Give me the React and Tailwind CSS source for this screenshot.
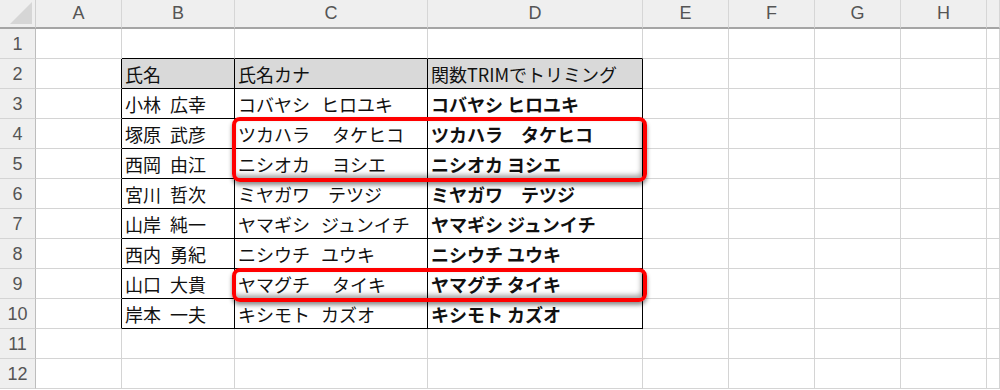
import React from 'react';

const colWidths = '36px 86px 113px 193px 215px 86px 86px 86px 86px 13px';
const letters = ['A', 'B', 'C', 'D', 'E', 'F', 'G', 'H', ''];

// table data, rows 2..10
const rows = [
  ['氏名', '氏名カナ', '関数TRIMでトリミング'],
  ['小林 広幸', 'コバヤシ ヒロユキ', 'コバヤシ ヒロユキ'],
  ['塚原 武彦', 'ツカハラ　 タケヒコ', 'ツカハラ　タケヒコ'],
  ['西岡 由江', 'ニシオカ 　ヨシエ', 'ニシオカ ヨシエ'],
  ['宮川 哲次', 'ミヤガワ　テツジ', 'ミヤガワ　テツジ'],
  ['山岸 純一', 'ヤマギシ ジュンイチ', 'ヤマギシ ジュンイチ'],
  ['西内 勇紀', 'ニシウチ ユウキ', 'ニシウチ ユウキ'],
  ['山口 大貴', 'ヤマグチ　 タイキ', 'ヤマグチ タイキ'],
  ['岸本 一夫', 'キシモト カズオ', 'キシモト カズオ'],
];

const jp = { fontFamily: '"Noto Sans CJK JP", "Noto Sans", sans-serif' };

function Cell({ r, c }) {
  // r: 1..12, c: 1..9 (A..H + overflow)
  const inTable = r >= 2 && r <= 10 && c >= 2 && c <= 4;
  const leftOfTable = r >= 2 && r <= 10 && c === 1;
  const aboveTable = r === 1 && c >= 2 && c <= 4;
  const text = inTable ? rows[r - 2][c - 2] : '';
  let cls = 'border-r border-b flex items-end pb-[3px] pl-[3px] whitespace-pre overflow-hidden text-[18px] leading-[22px] text-[#111] ';
  if (inTable) cls += 'border-black ';
  else if (leftOfTable) cls += 'border-b-[#d4d4d4] border-r-black ';
  else if (aboveTable) cls += 'border-r-[#d4d4d4] border-b-black ';
  else cls += 'border-[#d4d4d4] ';
  if (inTable && r === 2) cls += 'bg-[#d9d9d9] ';
  else cls += 'bg-white ';
  if (inTable && c === 4 && r > 2) cls += 'font-bold ';
  if (inTable && c === 2) cls += '[word-spacing:5px] ';
  // a full-width space already makes the gap wide, only plain spaces get widened
  if (inTable && c === 3 && !text.includes('　')) cls += '[word-spacing:7px] ';
  return (
    <div className={cls} style={jp}>
      {text}
    </div>
  );
}

export default function App() {
  const cells = [];
  for (let r = 1; r <= 12; r++) {
    cells.push(
      <div
        key={`h${r}`}
        className="bg-[#efefef] border-r border-r-[#bdbdbd] border-b border-b-[#d4d4d4] flex items-center justify-center text-[18px] text-[#555] pt-[2px]"
        style={{ fontFamily: '"Liberation Sans", Arial, sans-serif' }}
      >
        {r}
      </div>
    );
    for (let c = 1; c <= 9; c++) cells.push(<Cell key={`${r}-${c}`} r={r} c={c} />);
  }

  return (
    <div className="relative w-[1000px] h-[390px] overflow-hidden bg-white">
      <div className="grid" style={{ gridTemplateColumns: colWidths, gridTemplateRows: '29px repeat(12, 30px)' }}>
        <div className="bg-[#efefef] border-r border-r-[#d0d0d0] border-b-2 border-b-[#a5a5a5] relative">
          <svg className="absolute right-[3px] bottom-[3px]" width="22" height="22" viewBox="0 0 22 22">
            <polygon points="22,0 22,22 0,22" fill="#d6d6d6" />
          </svg>
        </div>
        {letters.map((l, i) => (
          <div
            key={l + i}
            className="bg-[#efefef] border-r border-r-[#d6d6d6] border-b-2 border-b-[#a5a5a5] flex items-center justify-center text-[18px] text-[#555]"
            style={{ fontFamily: '"Liberation Sans", Arial, sans-serif' }}
          >
            {l}
          </div>
        ))}
        {cells}
      </div>

      {/* red highlight frames */}
      <div className="absolute left-[232px] top-[117px] w-[415px] h-[65px] border-4 border-[#ff0000] rounded-[8px] shadow-[0_3px_4px_rgba(0,0,0,0.45),inset_-2px_-3px_5px_rgba(0,0,0,0.35)]" />
      <div className="absolute left-[232px] top-[268px] w-[415px] h-[34px] border-4 border-[#ff0000] rounded-[8px] shadow-[0_3px_4px_rgba(0,0,0,0.45),inset_-2px_-3px_5px_rgba(0,0,0,0.35)]" />
    </div>
  );
}
